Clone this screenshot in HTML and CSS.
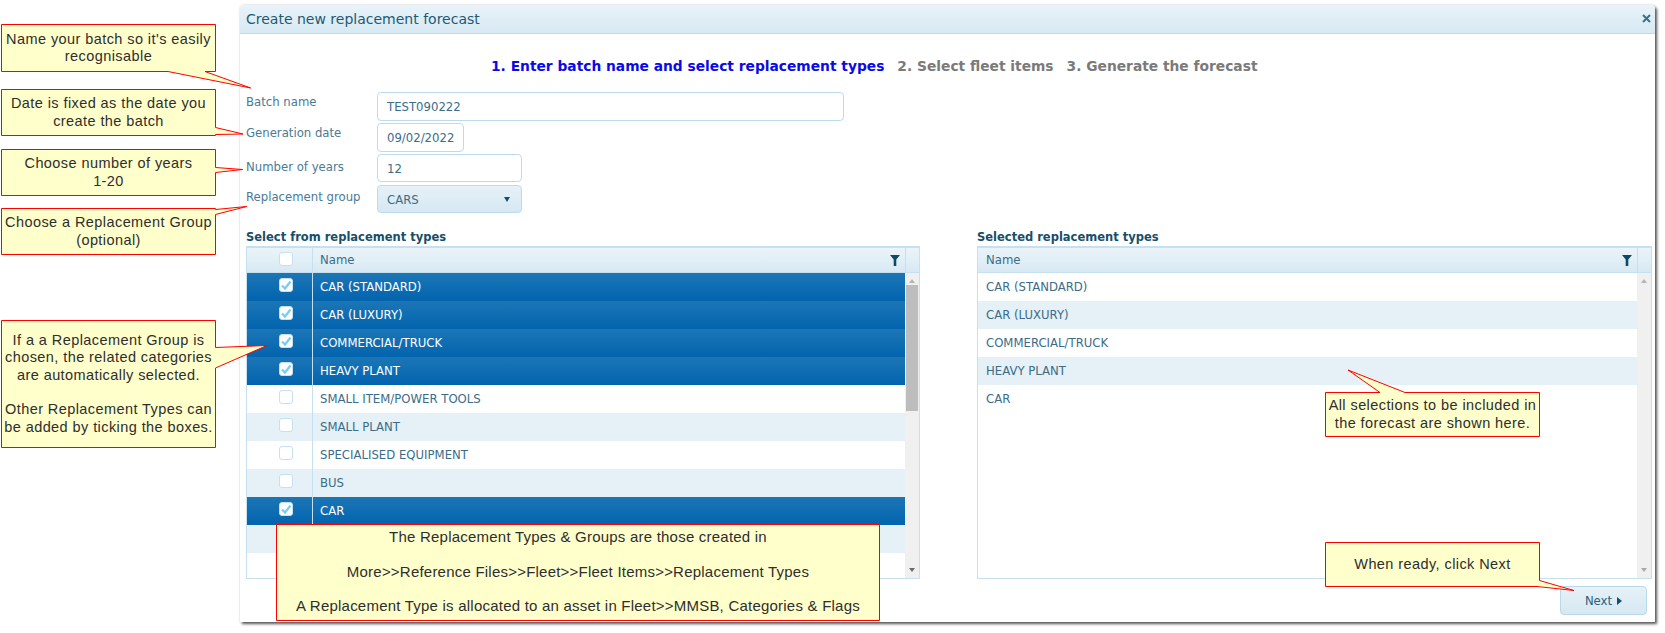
FILE: index.html
```html
<!DOCTYPE html>
<html lang="en">
<head>
<meta charset="utf-8">
<title>Create new replacement forecast</title>
<link rel="stylesheet" href="styles.css">
</head>
<body>
<main class="window">
  <header class="titlebar">
    <span class="titlebar-text">Create new replacement forecast</span>
    <svg class="close" width="9" height="9" viewBox="0 0 9 9"><path d="M1 1L8 8M8 1L1 8"/></svg>
  </header>
  <div class="content">
    <nav class="steps">
      <span class="step step-active">1. Enter batch name and select replacement types</span>
      <span class="step">2. Select fleet items</span>
      <span class="step">3. Generate the forecast</span>
    </nav>
    <form class="form">
      <label class="form-label">Batch name</label>
      <div class="field field-wide">TEST090222</div>
      <label class="form-label">Generation date</label>
      <div class="field field-date">09/02/2022</div>
      <label class="form-label form-label-low">Number of years</label>
      <div class="field field-mid">12</div>
      <label class="form-label form-label-low2">Replacement group</label>
      <div class="field field-mid field-select">CARS<span class="select-arrow"></span></div>
    </form>
    <div class="panels">
      <section class="panel">
        <h2 class="panel-title">Select from replacement types</h2>
        <div class="grid">
          <div class="grid-head">
            <div class="cell-check"><span class="check"></span></div>
            <div class="cell-name">Name</div>
            <svg class="filter" width="10" height="11" viewBox="0 0 10 11"><path d="M0 0H10L6.3 4.6V11H3.7V4.6Z"/></svg>
            <div class="head-end"></div>
          </div>
          <div class="grid-body">
            <div class="rows">
              <div class="row row-sel"><div class="cell-check"><span class="check"><svg width="12" height="12" viewBox="0 0 12 12"><path d="M2 6.5L5 9.5L10.5 2.5"/></svg></span></div><div class="cell-name">CAR (STANDARD)</div></div>
              <div class="row row-sel"><div class="cell-check"><span class="check"><svg width="12" height="12" viewBox="0 0 12 12"><path d="M2 6.5L5 9.5L10.5 2.5"/></svg></span></div><div class="cell-name">CAR (LUXURY)</div></div>
              <div class="row row-sel"><div class="cell-check"><span class="check"><svg width="12" height="12" viewBox="0 0 12 12"><path d="M2 6.5L5 9.5L10.5 2.5"/></svg></span></div><div class="cell-name">COMMERCIAL/TRUCK</div></div>
              <div class="row row-sel"><div class="cell-check"><span class="check"><svg width="12" height="12" viewBox="0 0 12 12"><path d="M2 6.5L5 9.5L10.5 2.5"/></svg></span></div><div class="cell-name">HEAVY PLANT</div></div>
              <div class="row"><div class="cell-check"><span class="check"></span></div><div class="cell-name">SMALL ITEM/POWER TOOLS</div></div>
              <div class="row row-alt"><div class="cell-check"><span class="check"></span></div><div class="cell-name">SMALL PLANT</div></div>
              <div class="row"><div class="cell-check"><span class="check"></span></div><div class="cell-name">SPECIALISED EQUIPMENT</div></div>
              <div class="row row-alt"><div class="cell-check"><span class="check"></span></div><div class="cell-name">BUS</div></div>
              <div class="row row-sel"><div class="cell-check"><span class="check"><svg width="12" height="12" viewBox="0 0 12 12"><path d="M2 6.5L5 9.5L10.5 2.5"/></svg></span></div><div class="cell-name">CAR</div></div>
              <div class="row row-alt"></div>
            </div>
            <div class="scrollbar">
              <span class="arrow-up"></span>
              <span class="thumb"></span>
              <span class="arrow-down"></span>
            </div>
          </div>
        </div>
      </section>
      <section class="panel panel-right">
        <h2 class="panel-title">Selected replacement types</h2>
        <div class="grid">
          <div class="grid-head">
            <div class="cell-name">Name</div>
            <svg class="filter" width="10" height="11" viewBox="0 0 10 11"><path d="M0 0H10L6.3 4.6V11H3.7V4.6Z"/></svg>
            <div class="head-end"></div>
          </div>
          <div class="grid-body">
            <div class="rows">
              <div class="row"><div class="cell-name">CAR (STANDARD)</div></div>
              <div class="row row-alt"><div class="cell-name">CAR (LUXURY)</div></div>
              <div class="row"><div class="cell-name">COMMERCIAL/TRUCK</div></div>
              <div class="row row-alt"><div class="cell-name">HEAVY PLANT</div></div>
              <div class="row"><div class="cell-name">CAR</div></div>
            </div>
            <div class="scrollbar">
              <span class="arrow-up"></span>
              <span class="arrow-down"></span>
            </div>
          </div>
        </div>
      </section>
    </div>
    <div class="actions">
      <button class="next" type="button">Next<span class="next-arrow"></span></button>
    </div>
  </div>
</main>

<svg class="callout-shapes" width="1665" height="633" viewBox="0 0 1665 633">
  <path d="M1.5 24.5H215.5V71.5H205L250.7 88L168 71.5H1.5Z"/>
  <path d="M1.5 89.5H215.5V127.5L243 134L215.5 134.5V135.5H1.5Z"/>
  <path d="M1.5 149.5H215.5V167.5L242.7 169.5L215.5 172.5V195.5H1.5Z"/>
  <path d="M1.5 208.5H215.5V209.5L246.7 206.5L215.5 214.5V254.5H1.5Z"/>
  <path d="M1.5 320.5H215.5V347.5L267 345.5L215.5 368V447.5H1.5Z"/>
  <path d="M1325.5 392.5H1380L1348 370L1405 392.5H1539.5V436.5H1325.5Z"/>
  <path d="M1325.5 542.5H1539.5V580.5L1574 590.5L1537 586.5H1325.5Z"/>
  <path d="M276.5 524.5H879.5V620.5H276.5Z"/>
</svg>
<p class="callout c1">Name your batch so it's easily<br>recognisable</p>
<p class="callout c2">Date is fixed as the date you<br>create the batch</p>
<p class="callout c3">Choose number of years<br>1-20</p>
<p class="callout c4">Choose a Replacement Group<br>(optional)</p>
<p class="callout c5">If a a Replacement Group is<br>chosen, the related categories<br>are automatically selected.<br><br>Other Replacement Types can<br>be added by ticking the boxes.</p>
<p class="callout c6">All selections to be included in<br>the forecast are shown here.</p>
<p class="callout c7">When ready, click Next</p>
<p class="callout c8">The Replacement Types &amp; Groups are those created in<br><br>More&gt;&gt;Reference Files&gt;&gt;Fleet&gt;&gt;Fleet Items&gt;&gt;Replacement Types<br><br>A Replacement Type is allocated to an asset in Fleet&gt;&gt;MMSB, Categories &amp; Flags</p>
</body>
</html>
```
FILE: styles.css
```css
* { box-sizing: border-box; }
html, body { margin: 0; padding: 0; }
body {
  position: relative;
  width: 1665px;
  height: 633px;
  overflow: hidden;
  background: #fff;
  font-family: "DejaVu Sans", Verdana, sans-serif;
  font-size: 11.7px;
  color: #3a6d88;
}
.window {
  display: flex;
  flex-direction: column;
  width: 1415px;
  height: 617px;
  margin: 5px 0 0 240px;
  background: #fff;
  border-radius: 4px 4px 0 0;
  box-shadow: 2px 2px 3px #555, 0 0 3px #ddd;
}
.titlebar {
  display: flex;
  align-items: center;
  justify-content: space-between;
  flex: 0 0 29px;
  padding: 0 4px 1px 6px;
  background: linear-gradient(#e8f3f9, #d7e9f3);
  border-bottom: 1px solid #bedcec;
  border-radius: 4px 4px 0 0;
}
.titlebar-text { font-size: 14px; color: #1f5a75; }
.close path { stroke: #3a7188; stroke-width: 2; fill: none; }
.content { display: flex; flex-direction: column; flex: 1; padding: 0 3px 0 6px; }
.steps {
  display: flex;
  gap: 13px;
  height: 58px;
  padding: 23px 0 0 245px;
  font-size: 13.8px;
  line-height: 18px;
  font-weight: 700;
}
.step { color: #7a7a7a; }
.step-active { color: #0a0ae6; }
.form {
  display: grid;
  grid-template-columns: 131px 1fr;
  grid-auto-rows: 28px;
  row-gap: 3px;
  align-items: start;
  height: 121px;
}
.form-label { line-height: 20px; color: #4a7a94; }
.form-label-low { padding-top: 3px; }
.form-label-low2 { padding-top: 2px; }
.field {
  display: flex;
  align-items: center;
  height: 29px;
  padding: 1px 9px 0;
  border: 1px solid #bcdcee;
  border-radius: 4px;
  color: #3a6d88;
  background: #fff;
}
.field-wide { width: 467px; }
.field-date { width: 87px; }
.field-mid { width: 145px; height: 28px; }
.field-select {
  justify-content: space-between;
  background: linear-gradient(#e6f1f8, #d6e8f2);
}
.select-arrow {
  width: 0;
  height: 0;
  margin-right: 2px;
  border: 3.5px solid transparent;
  border-top: 5px solid #12506c;
  border-bottom: 0;
}
.panels { display: flex; gap: 57px; margin-top: 4px; }
.panel { width: 674px; display: flex; flex-direction: column; }
.panel-right { width: 675px; }
.panel-title {
  margin: 0;
  height: 29px;
  padding-top: 11px;
  font-size: 11.5px;
  line-height: 18px;
  font-weight: 700;
  color: #174e68;
}
.grid {
  display: flex;
  flex-direction: column;
  height: 333px;
  border: 1px solid #c6e0ef;
  border-top-width: 2px;
  border-left-width: 1px;
}
.grid-head {
  display: flex;
  align-items: center;
  flex: 0 0 25px;
  background: linear-gradient(#eaf4f9, #d8e9f3);
  border-bottom: 1px solid #c6e0ef;
  color: #3a6d88;
}
.grid-head .cell-name { flex: 1; }
.head-end { align-self: stretch; width: 14px; margin-left: 5px; border-left: 1px solid #c6e0ef; }
.filter path { fill: #0f4a63; }
.grid-body { display: flex; flex: 1; min-height: 0; }
.rows { flex: 1; overflow: hidden; }
.row { display: flex; height: 28px; background: #fff; color: #3a6d88; }
.row-alt { background: #e5f0f7; }
.row-sel { background: linear-gradient(#1c76b6, #0264ae); color: #fff; }
.cell-check {
  display: flex;
  align-items: center;
  justify-content: center;
  flex: 0 0 66px;
  align-self: stretch;
  padding: 0 0 3px 12px;
  border-right: 1px solid #c6e0ef;
}
.row .cell-check { padding-bottom: 4px; }
.cell-name { display: flex; align-items: center; padding: 0 7px; line-height: 20px; }
.panel-right .cell-name { padding: 0 8px; }
.check {
  display: flex;
  align-items: center;
  justify-content: center;
  width: 14px;
  height: 14px;
  background: #fff;
  border: 1px solid #c6e0ef;
  border-radius: 3px;
}
.check path { fill: none; stroke: #74cdf3; stroke-width: 2.2; }
.scrollbar {
  display: flex;
  flex-direction: column;
  align-items: center;
  flex: 0 0 14px;
  background: #f0f0f0;
  padding: 6px 0;
}
.arrow-up, .arrow-down { width: 0; height: 0; border: 3.5px solid transparent; }
.arrow-up { border-bottom: 4px solid #b5b5b5; border-top: 0; }
.arrow-down { margin-top: auto; border-top: 4px solid #6a6a6a; border-bottom: 0; }
.panel-right .arrow-down { border-top-color: #a9a9a9; }
.thumb { width: 12px; height: 126px; margin-top: 2px; background: #bdbdbd; }
.actions { display: flex; justify-content: flex-end; padding: 7px 5px 0 0; }
.next {
  display: flex;
  align-items: center;
  justify-content: center;
  gap: 5px;
  width: 87px;
  height: 29px;
  padding: 0;
  border: 1px solid #b8d9ea;
  border-radius: 4px;
  background: linear-gradient(#e6f1f8, #d6e8f2);
  color: #2a5f7a;
  font: 11.7px "DejaVu Sans", Verdana, sans-serif;
}
.next-arrow {
  width: 0;
  height: 0;
  border: 4px solid transparent;
  border-left: 5px solid #12506c;
  border-right: 0;
}
.callout-shapes { position: absolute; left: 0; top: 0; }
.callout-shapes path { fill: #ffffcc; stroke: #ff0000; stroke-width: 1; }
.callout {
  position: absolute;
  display: flex;
  align-items: center;
  justify-content: center;
  margin: 0;
  text-align: center;
  font-family: "Liberation Sans", Arial, sans-serif;
  font-size: 14.5px;
  line-height: 17.3px;
  letter-spacing: 0.42px;
  white-space: nowrap;
  color: #2e2e2e;
}
.c1, .c2, .c3, .c4, .c5 { left: 2px; width: 213px; }
.c1 { top: 25px; height: 46px; }
.c2 { top: 90px; height: 45px; }
.c3 { top: 150px; height: 45px; }
.c4 { top: 209px; height: 45px; }
.c5 { top: 321px; height: 126px; }
.c6, .c7 { left: 1326px; width: 213px; }
.c6 { top: 393px; height: 43px; }
.c7 { top: 543px; height: 43px; }
.c8 { left: 277px; top: 524px; width: 602px; height: 95px; font-size: 15px; letter-spacing: 0.22px; }
```
